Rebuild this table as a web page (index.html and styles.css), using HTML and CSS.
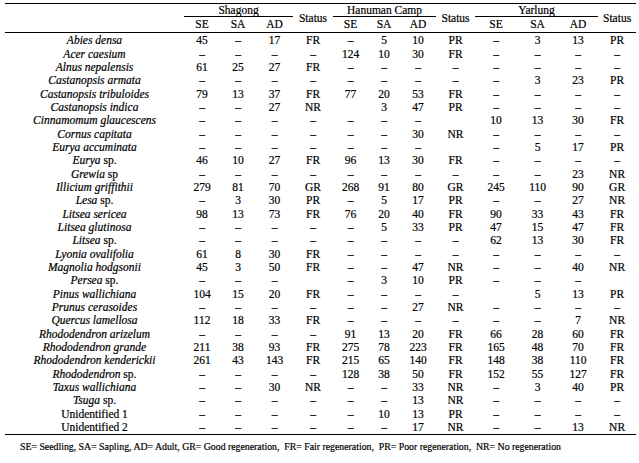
FILE: index.html
```html
<!DOCTYPE html>
<html>
<head>
<meta charset="utf-8">
<link rel="stylesheet" href="styles.css">
</head>
<body>
<div class="wrap">
<table class="regen">
<colgroup>
<col class="c-sp"><col class="c-36"><col class="c-36"><col class="c-37"><col class="c-40">
<col class="c-35"><col class="c-32"><col class="c-36"><col class="c-39">
<col class="c-42"><col class="c-41"><col class="c-40"><col class="c-38">
</colgroup>
<thead>
<tr class="head-top">
<th rowspan="2" class="span2"></th>
<th colspan="3" class="grp">Shagong</th>
<th rowspan="2" class="span2">Status</th>
<th colspan="3" class="grp">Hanuman Camp</th>
<th rowspan="2" class="span2">Status</th>
<th colspan="3" class="grp">Yarlung</th>
<th rowspan="2" class="span2">Status</th>
</tr>
<tr class="head-sub">
<th>SE</th><th>SA</th><th>AD</th>
<th>SE</th><th>SA</th><th>AD</th>
<th>SE</th><th>SA</th><th>AD</th>
</tr>
</thead>
<tbody>
<tr><td><i>Abies densa</i></td><td>45</td><td>–</td><td>17</td><td>FR</td><td>–</td><td>5</td><td>10</td><td>PR</td><td>–</td><td>3</td><td>13</td><td>PR</td></tr>
<tr><td><i>Acer caesium</i></td><td>–</td><td>–</td><td>–</td><td>–</td><td>124</td><td>10</td><td>30</td><td>FR</td><td>–</td><td>–</td><td>–</td><td>–</td></tr>
<tr><td><i>Alnus nepalensis</i></td><td>61</td><td>25</td><td>27</td><td>FR</td><td>–</td><td>–</td><td>–</td><td>–</td><td>–</td><td>–</td><td>–</td><td>–</td></tr>
<tr><td><i>Castanopsis armata</i></td><td>–</td><td>–</td><td>–</td><td>–</td><td>–</td><td>–</td><td>–</td><td>–</td><td>–</td><td>3</td><td>23</td><td>PR</td></tr>
<tr><td><i>Castanopsis tribuloides</i></td><td>79</td><td>13</td><td>37</td><td>FR</td><td>77</td><td>20</td><td>53</td><td>FR</td><td>–</td><td>–</td><td>–</td><td>–</td></tr>
<tr><td><i>Castanopsis indica</i></td><td>–</td><td>–</td><td>27</td><td>NR</td><td></td><td>3</td><td>47</td><td>PR</td><td>–</td><td>–</td><td>–</td><td>–</td></tr>
<tr><td><i>Cinnamomum glaucescens</i></td><td>–</td><td>–</td><td>–</td><td>–</td><td>–</td><td>–</td><td>–</td><td></td><td>10</td><td>13</td><td>30</td><td>FR</td></tr>
<tr><td><i>Cornus capitata</i></td><td>–</td><td>–</td><td>–</td><td>–</td><td>–</td><td>–</td><td>30</td><td>NR</td><td>–</td><td>–</td><td>–</td><td>–</td></tr>
<tr><td><i>Eurya accuminata</i></td><td>–</td><td>–</td><td>–</td><td>–</td><td>–</td><td>–</td><td>–</td><td></td><td>–</td><td>5</td><td>17</td><td>PR</td></tr>
<tr><td><i>Eurya</i> sp.</td><td>46</td><td>10</td><td>27</td><td>FR</td><td>96</td><td>13</td><td>30</td><td>FR</td><td>–</td><td>–</td><td>–</td><td>–</td></tr>
<tr><td><i>Grewia</i> sp</td><td>–</td><td>–</td><td>–</td><td>–</td><td>–</td><td>–</td><td>–</td><td>–</td><td>–</td><td>–</td><td>23</td><td>NR</td></tr>
<tr><td><i>Illicium griffithii</i></td><td>279</td><td>81</td><td>70</td><td>GR</td><td>268</td><td>91</td><td>80</td><td>GR</td><td>245</td><td>110</td><td>90</td><td>GR</td></tr>
<tr><td><i>Lesa</i> sp.</td><td>–</td><td>3</td><td>30</td><td>PR</td><td>–</td><td>5</td><td>17</td><td>PR</td><td>–</td><td>–</td><td>27</td><td>NR</td></tr>
<tr><td><i>Litsea sericea</i></td><td>98</td><td>13</td><td>73</td><td>FR</td><td>76</td><td>20</td><td>40</td><td>FR</td><td>90</td><td>33</td><td>43</td><td>FR</td></tr>
<tr><td><i>Litsea glutinosa</i></td><td>–</td><td>–</td><td>–</td><td>–</td><td>–</td><td>5</td><td>33</td><td>PR</td><td>47</td><td>15</td><td>47</td><td>FR</td></tr>
<tr><td><i>Litsea</i> sp.</td><td>–</td><td>–</td><td>–</td><td>–</td><td>–</td><td>–</td><td>–</td><td>–</td><td>62</td><td>13</td><td>30</td><td>FR</td></tr>
<tr><td><i>Lyonia ovalifolia</i></td><td>61</td><td>8</td><td>30</td><td>FR</td><td>–</td><td>–</td><td>–</td><td>–</td><td>–</td><td>–</td><td>–</td><td>–</td></tr>
<tr><td><i>Magnolia hodgsonii</i></td><td>45</td><td>3</td><td>50</td><td>FR</td><td>–</td><td>–</td><td>47</td><td>NR</td><td>–</td><td>–</td><td>40</td><td>NR</td></tr>
<tr><td><i>Persea</i> sp.</td><td>–</td><td>–</td><td>–</td><td></td><td>–</td><td>3</td><td>10</td><td>PR</td><td>–</td><td>–</td><td>–</td><td></td></tr>
<tr><td><i>Pinus wallichiana</i></td><td>104</td><td>15</td><td>20</td><td>FR</td><td>–</td><td>–</td><td>–</td><td>–</td><td></td><td>5</td><td>13</td><td>PR</td></tr>
<tr><td><i>Prunus cerasoides</i></td><td>–</td><td>–</td><td>–</td><td>–</td><td>–</td><td>–</td><td>27</td><td>NR</td><td>–</td><td>–</td><td>–</td><td>–</td></tr>
<tr><td><i>Quercus lamellosa</i></td><td>112</td><td>18</td><td>33</td><td>FR</td><td>–</td><td>–</td><td>–</td><td>–</td><td>–</td><td>–</td><td>7</td><td>NR</td></tr>
<tr><td><i>Rhododendron arizelum</i></td><td>–</td><td>–</td><td>–</td><td>–</td><td>91</td><td>13</td><td>20</td><td>FR</td><td>66</td><td>28</td><td>60</td><td>FR</td></tr>
<tr><td><i>Rhododendron grande</i></td><td>211</td><td>38</td><td>93</td><td>FR</td><td>275</td><td>78</td><td>223</td><td>FR</td><td>165</td><td>48</td><td>70</td><td>FR</td></tr>
<tr><td><i>Rhododendron kenderickii</i></td><td>261</td><td>43</td><td>143</td><td>FR</td><td>215</td><td>65</td><td>140</td><td>FR</td><td>148</td><td>38</td><td>110</td><td>FR</td></tr>
<tr><td><i>Rhododendron</i> sp.</td><td>–</td><td>–</td><td>–</td><td>–</td><td>128</td><td>38</td><td>50</td><td>FR</td><td>152</td><td>55</td><td>127</td><td>FR</td></tr>
<tr><td><i>Taxus wallichiana</i></td><td>–</td><td>–</td><td>30</td><td>NR</td><td>–</td><td>–</td><td>33</td><td>NR</td><td>–</td><td>3</td><td>40</td><td>PR</td></tr>
<tr><td><i>Tsuga</i> sp.</td><td>–</td><td>–</td><td>–</td><td>–</td><td>–</td><td>–</td><td>13</td><td>NR</td><td>–</td><td>–</td><td>–</td><td>–</td></tr>
<tr><td>Unidentified 1</td><td>–</td><td>–</td><td>–</td><td>–</td><td>–</td><td>10</td><td>13</td><td>PR</td><td>–</td><td>–</td><td>–</td><td>–</td></tr>
<tr><td>Unidentified 2</td><td>–</td><td>–</td><td>–</td><td>–</td><td>–</td><td>–</td><td>17</td><td>NR</td><td>–</td><td>–</td><td>13</td><td>NR</td></tr>
</tbody>
</table>
<p class="note">SE= Seedling, SA= Sapling, AD= Adult, GR= Good regeneration,  FR= Fair regeneration,  PR= Poor regeneration,  NR= No regeneration</p>
</div>
</body>
</html>
```
FILE: styles.css
```css
html, body {
  margin: 0;
  background: #fff;
}
body {
  font-family: "Liberation Serif", "Times New Roman", serif;
  color: #000;
  -webkit-text-stroke: 0.2px #000;
}
.wrap {
  padding: 3px 3px 0 5px;
}
.regen {
  border-collapse: separate;
  border-spacing: 0;
  table-layout: fixed;
  width: 631px;
  border-top: 1px solid #000;
  border-bottom: 1px solid #000;
  font-size: 11.5px;
}
.regen th,
.regen td {
  padding: 0;
  text-align: center;
  font-weight: normal;
  vertical-align: middle;
  white-space: nowrap;
}
.c-sp { width: 179px; }
.c-32 { width: 32px; }
.c-35 { width: 35px; }
.c-36 { width: 36px; }
.c-37 { width: 37px; }
.c-38 { width: 38px; }
.c-39 { width: 39px; }
.c-40 { width: 40px; }
.c-41 { width: 41px; }
.c-42 { width: 42px; }
.head-top th {
  line-height: 12px;
}
.head-top th.grp {
  border-bottom: 1px solid #000;
}
.head-top th.span2 {
  border-bottom: 1px solid #000;
}
.head-sub th {
  line-height: 15px;
  border-bottom: 1px solid #000;
}
.regen tbody td {
  line-height: 13.33px;
}
.regen tbody tr:first-child td {
  padding-top: 1.4px;
}
.note {
  margin: 6px 0 0 15px;
  font-size: 9.8px;
  line-height: 12px;
  white-space: pre;
}
```
